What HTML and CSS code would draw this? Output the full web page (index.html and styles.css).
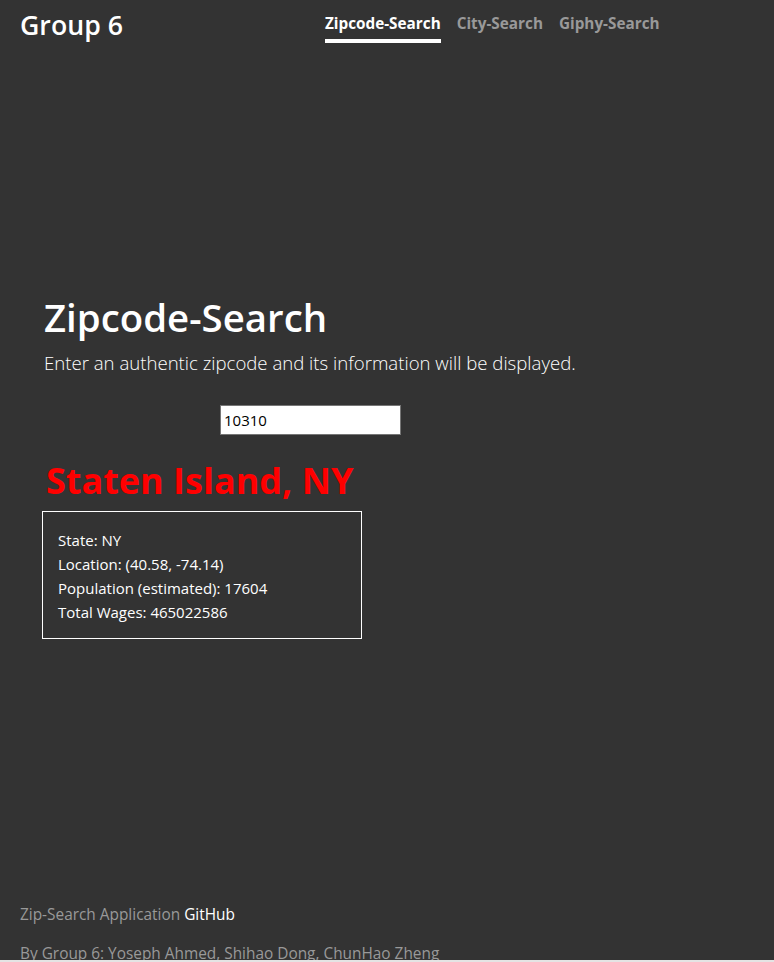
FILE: index.html
```html
<!DOCTYPE html>
<html lang="en">
<head>
<meta charset="utf-8">
<title>Zipcode-Search</title>
<link rel="stylesheet" href="styles.css">
</head>
<body>
<div class="page">
  <header class="masthead">
    <h3 class="brand">Group 6</h3>
    <nav class="nav">
      <a class="nav-link active" href="#">Zipcode-Search</a>
      <a class="nav-link" href="#">City-Search</a>
      <a class="nav-link" href="#">Giphy-Search</a>
    </nav>
  </header>
  <main class="main">
    <h1 class="title">Zipcode-Search</h1>
    <p class="lead">Enter an authentic zipcode and its information will be displayed.</p>
    <div class="search-row"><input class="zip-input" type="text" value="10310"></div>
    <h2 class="city">Staten Island, NY</h2>
    <div class="info">
      <p>State: NY</p>
      <p>Location: (40.58, -74.14)</p>
      <p>Population (estimated): 17604</p>
      <p>Total Wages: 465022586</p>
    </div>
  </main>
  <footer class="footer">
    <p>Zip-Search Application <a href="#">GitHub</a></p>
    <p>By Group 6: Yoseph Ahmed, Shihao Dong, ChunHao Zheng</p>
  </footer>
</div>
</body>
</html>
```
FILE: styles.css
```css
html {
  background: #e4e4e4;
}
body {
  margin: 0;
  font-family: "Open Sans", "Noto Sans", sans-serif;
  color: #fff;
}
.page {
  height: 960px;
  overflow: hidden;
  background: #333;
  display: flex;
  flex-direction: column;
}
.masthead {
  display: flex;
  align-items: flex-start;
  padding: 6px 20px 0 20px;
}
.brand {
  margin: 0;
  font-size: 26.7px;
  font-weight: 600;
  line-height: 1.45;
}
.nav {
  display: flex;
  gap: 16px;
  margin-left: 202px;
  padding-top: 5px;
}
.nav-link {
  color: #999;
  text-decoration: none;
  font-weight: 700;
  font-size: 15.3px;
  line-height: 24px;
  padding: 0 0 4px;
  border-bottom: 4px solid transparent;
}
.nav-link.active {
  color: #fff;
  border-bottom-color: #fff;
}
.main {
  padding: 0 44px;
  margin-top: 249px;
}
.title {
  margin: 0;
  font-size: 38.4px;
  font-weight: 600;
  line-height: 1.2;
}
.lead {
  margin: 9px 0 0;
  font-size: 18.6px;
  font-weight: 300;
  line-height: 1.5;
}
.search-row {
  margin-top: 28px;
  padding-left: 176px;
}
.zip-input {
  width: 181px;
  height: 30px;
  box-sizing: border-box;
  border: 1px solid #767676;
  padding: 1px 3px;
  font-family: "Open Sans", sans-serif;
  font-size: 15px;
  color: #000;
  background: #fff;
}
.city {
  margin: 24px 0 0 2px;
  color: #f00;
  font-size: 36px;
  font-weight: 700;
  line-height: 1.2;
}
.info {
  margin: 9px 0 0 -2px;
  width: 320px;
  box-sizing: border-box;
  border: 1px solid #fff;
  padding: 16px 15px 14px;
}
.info p {
  margin: 0;
  font-size: 15px;
  line-height: 24px;
}
.footer {
  margin-top: auto;
  padding: 0 20px;
  color: #999;
  font-size: 15.4px;
}
.footer p {
  margin: 0 0 16px;
  line-height: 1.5;
}
.footer p:last-child {
  margin-bottom: -5px;
}
.footer a {
  color: #fff;
  text-decoration: none;
}
```
